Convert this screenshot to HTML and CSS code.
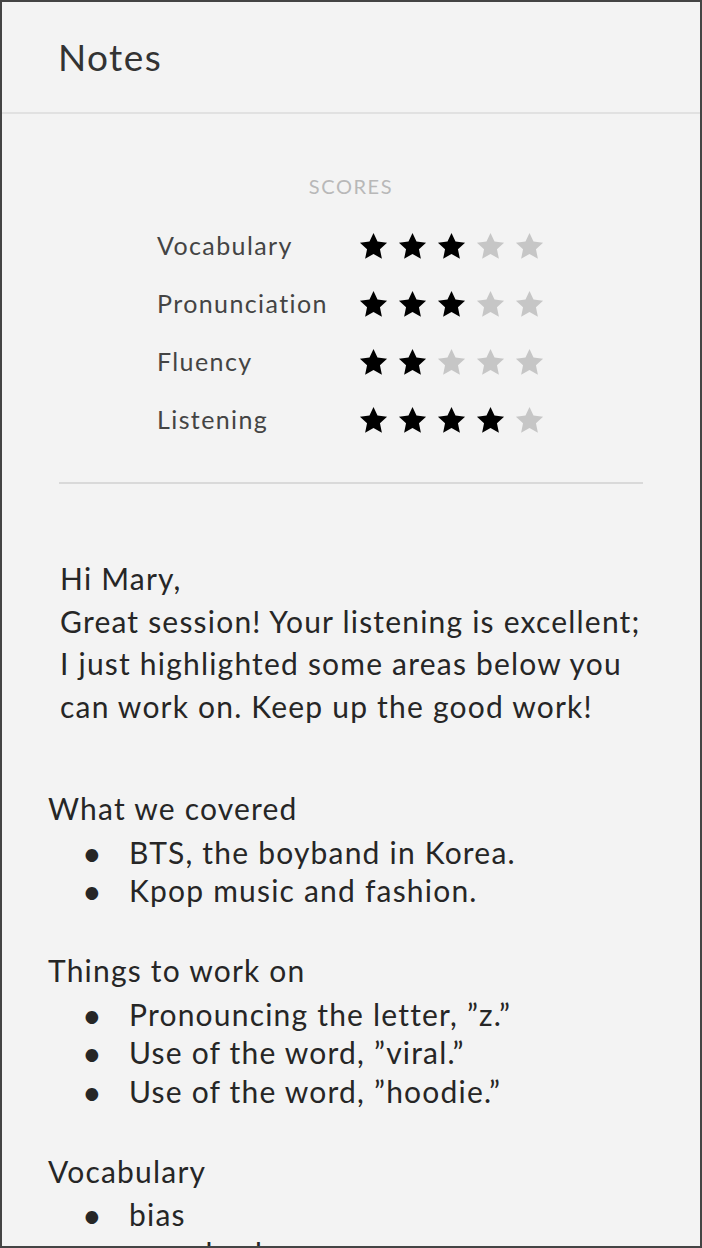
FILE: index.html
```html
<!DOCTYPE html>
<html lang="en">
<head>
    <meta charset="UTF-8">
    <meta name="viewport" content="width=device-width, initial-scale=1.0">
    <title>Notes</title>
    <link rel="stylesheet" href="styles.css">
</head>
<body>

<div class="frame">
    <div class="header">
        <h1>Notes</h1>
    </div>

    <div class="scores">
        <div class="scores-title">SCORES</div>
        <div class="score-table">
            <div class="score-label">Vocabulary</div>
            <div class="stars">
                <svg class="star on" viewBox="0 0 24 24"><polygon points="12,1.5 15.1,8.2 22.5,9 17,14.1 18.5,21.5 12,17.8 5.5,21.5 7,14.1 1.5,9 8.9,8.2"/></svg>
                <svg class="star on" viewBox="0 0 24 24"><polygon points="12,1.5 15.1,8.2 22.5,9 17,14.1 18.5,21.5 12,17.8 5.5,21.5 7,14.1 1.5,9 8.9,8.2"/></svg>
                <svg class="star on" viewBox="0 0 24 24"><polygon points="12,1.5 15.1,8.2 22.5,9 17,14.1 18.5,21.5 12,17.8 5.5,21.5 7,14.1 1.5,9 8.9,8.2"/></svg>
                <svg class="star" viewBox="0 0 24 24"><polygon points="12,1.5 15.1,8.2 22.5,9 17,14.1 18.5,21.5 12,17.8 5.5,21.5 7,14.1 1.5,9 8.9,8.2"/></svg>
                <svg class="star" viewBox="0 0 24 24"><polygon points="12,1.5 15.1,8.2 22.5,9 17,14.1 18.5,21.5 12,17.8 5.5,21.5 7,14.1 1.5,9 8.9,8.2"/></svg>
            </div>

            <div class="score-label">Pronunciation</div>
            <div class="stars">
                <svg class="star on" viewBox="0 0 24 24"><polygon points="12,1.5 15.1,8.2 22.5,9 17,14.1 18.5,21.5 12,17.8 5.5,21.5 7,14.1 1.5,9 8.9,8.2"/></svg>
                <svg class="star on" viewBox="0 0 24 24"><polygon points="12,1.5 15.1,8.2 22.5,9 17,14.1 18.5,21.5 12,17.8 5.5,21.5 7,14.1 1.5,9 8.9,8.2"/></svg>
                <svg class="star on" viewBox="0 0 24 24"><polygon points="12,1.5 15.1,8.2 22.5,9 17,14.1 18.5,21.5 12,17.8 5.5,21.5 7,14.1 1.5,9 8.9,8.2"/></svg>
                <svg class="star" viewBox="0 0 24 24"><polygon points="12,1.5 15.1,8.2 22.5,9 17,14.1 18.5,21.5 12,17.8 5.5,21.5 7,14.1 1.5,9 8.9,8.2"/></svg>
                <svg class="star" viewBox="0 0 24 24"><polygon points="12,1.5 15.1,8.2 22.5,9 17,14.1 18.5,21.5 12,17.8 5.5,21.5 7,14.1 1.5,9 8.9,8.2"/></svg>
            </div>

            <div class="score-label">Fluency</div>
            <div class="stars">
                <svg class="star on" viewBox="0 0 24 24"><polygon points="12,1.5 15.1,8.2 22.5,9 17,14.1 18.5,21.5 12,17.8 5.5,21.5 7,14.1 1.5,9 8.9,8.2"/></svg>
                <svg class="star on" viewBox="0 0 24 24"><polygon points="12,1.5 15.1,8.2 22.5,9 17,14.1 18.5,21.5 12,17.8 5.5,21.5 7,14.1 1.5,9 8.9,8.2"/></svg>
                <svg class="star" viewBox="0 0 24 24"><polygon points="12,1.5 15.1,8.2 22.5,9 17,14.1 18.5,21.5 12,17.8 5.5,21.5 7,14.1 1.5,9 8.9,8.2"/></svg>
                <svg class="star" viewBox="0 0 24 24"><polygon points="12,1.5 15.1,8.2 22.5,9 17,14.1 18.5,21.5 12,17.8 5.5,21.5 7,14.1 1.5,9 8.9,8.2"/></svg>
                <svg class="star" viewBox="0 0 24 24"><polygon points="12,1.5 15.1,8.2 22.5,9 17,14.1 18.5,21.5 12,17.8 5.5,21.5 7,14.1 1.5,9 8.9,8.2"/></svg>
            </div>

            <div class="score-label">Listening</div>
            <div class="stars">
                <svg class="star on" viewBox="0 0 24 24"><polygon points="12,1.5 15.1,8.2 22.5,9 17,14.1 18.5,21.5 12,17.8 5.5,21.5 7,14.1 1.5,9 8.9,8.2"/></svg>
                <svg class="star on" viewBox="0 0 24 24"><polygon points="12,1.5 15.1,8.2 22.5,9 17,14.1 18.5,21.5 12,17.8 5.5,21.5 7,14.1 1.5,9 8.9,8.2"/></svg>
                <svg class="star on" viewBox="0 0 24 24"><polygon points="12,1.5 15.1,8.2 22.5,9 17,14.1 18.5,21.5 12,17.8 5.5,21.5 7,14.1 1.5,9 8.9,8.2"/></svg>
                <svg class="star on" viewBox="0 0 24 24"><polygon points="12,1.5 15.1,8.2 22.5,9 17,14.1 18.5,21.5 12,17.8 5.5,21.5 7,14.1 1.5,9 8.9,8.2"/></svg>
                <svg class="star" viewBox="0 0 24 24"><polygon points="12,1.5 15.1,8.2 22.5,9 17,14.1 18.5,21.5 12,17.8 5.5,21.5 7,14.1 1.5,9 8.9,8.2"/></svg>
            </div>
        </div>
    </div>

    <div class="notes">
        <p class="message">Hi Mary,<br>
        Great session! Your listening is excellent; I just highlighted some areas below you can work on. Keep up the good work!</p>

        <div class="section">
            <div class="section-title">What we covered</div>
            <ul>
                <li>BTS, the boyband in Korea.</li>
                <li>Kpop music and fashion.</li>
            </ul>
        </div>

        <div class="section">
            <div class="section-title">Things to work on</div>
            <ul>
                <li>Pronouncing the letter, ”z.”</li>
                <li>Use of the word, ”viral.”</li>
                <li>Use of the word, ”hoodie.”</li>
            </ul>
        </div>

        <div class="section">
            <div class="section-title">Vocabulary</div>
            <ul>
                <li>bias</li>
                <li>comeback</li>
            </ul>
        </div>
    </div>
</div>

</body>
</html>
```

FILE: styles.css
```css
html, body {
    margin: 0;
    padding: 0;
}
body {
    font-family: Lato, "Noto Sans", sans-serif;
    background-color: #444;
}
.frame {
    box-sizing: border-box;
    width: 702px;
    height: 1248px;
    border: 2px solid #444;
    background-color: #f3f3f3;
    overflow: hidden;
}
.header {
    height: 110px;
    border-bottom: 2px solid #e1e1e1;
    padding-left: 56px;
    display: flex;
    align-items: center;
}
.header h1 {
    margin: 0 0 2px 0;
    font-size: 37px;
    font-weight: normal;
    letter-spacing: 1.4px;
    color: #333;
}
.scores {
    margin: 0 57px;
    padding-top: 60px;
    padding-bottom: 34px;
    border-bottom: 2px solid #d9d9d9;
    text-align: center;
}
.scores-title {
    font-size: 20px;
    color: #b8b8b8;
    letter-spacing: 1.6px;
    margin-bottom: 18px;
}
.score-table {
    display: inline-grid;
    grid-template-columns: 201px auto;
    grid-auto-rows: 58px;
    align-items: center;
    text-align: left;
}
.score-label {
    font-size: 25px;
    letter-spacing: 1.4px;
    color: #444;
}
.stars {
    display: flex;
    gap: 8px;
    margin-top: 2px;
}
.star {
    width: 31px;
    height: 31px;
    fill: #c6c6c6;
}
.star.on {
    fill: #000;
}
.notes {
    padding: 73px 0 0 46px;
    color: #262626;
    font-size: 30px;
    letter-spacing: 1.2px;
}
.message {
    margin: 0 48px 62px 12px;
    line-height: 42.5px;
}
.section {
    margin-bottom: 41.5px;
}
.section-title {
    line-height: 38.5px;
    margin-bottom: 5px;
}
ul {
    margin: 0;
    padding: 0 0 0 34px;
    list-style: none;
    line-height: 38.5px;
}
li::before {
    content: "•";
    display: inline-block;
    width: 47px;
    font-size: 34px;
    line-height: 0;
    vertical-align: -2px;
    letter-spacing: 0;
}
```
